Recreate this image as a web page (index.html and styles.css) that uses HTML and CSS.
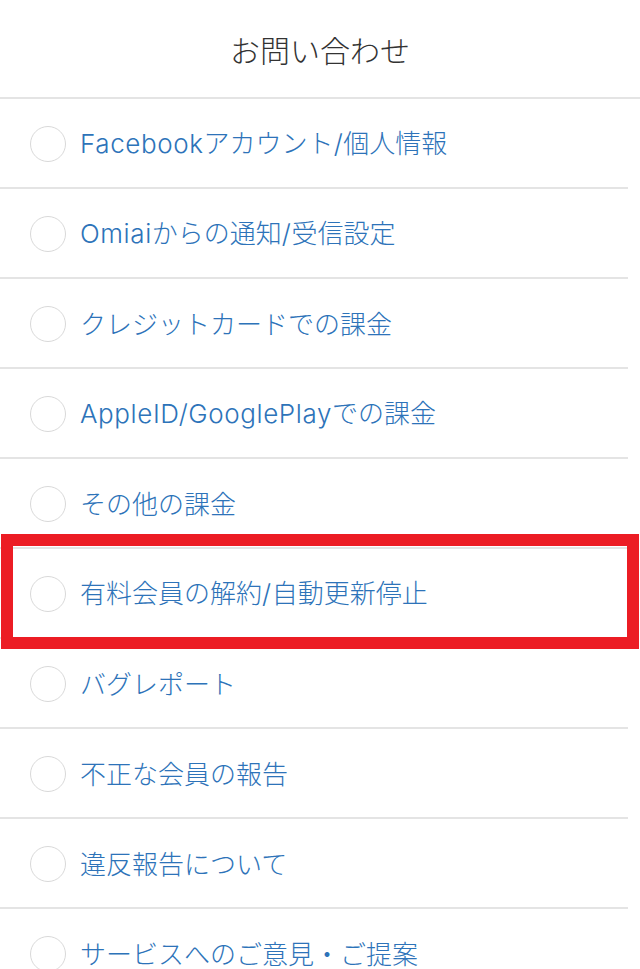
FILE: index.html
```html
<!DOCTYPE html>
<html lang="ja">
<head>
<meta charset="utf-8">
<title>お問い合わせ</title>
<link rel="stylesheet" href="styles.css">
</head>
<body>
<header class="header">
  <h1 class="title">お問い合わせ</h1>
</header>
<ul class="list">
  <li class="row"><span class="radio"></span><span class="label"><span class="latin">Facebook</span>アカウント<span class="latin">/</span>個人情報</span></li>
  <li class="row"><span class="radio"></span><span class="label"><span class="latin">Omiai</span>からの通知<span class="latin">/</span>受信設定</span></li>
  <li class="row"><span class="radio"></span><span class="label">クレジットカードでの課金</span></li>
  <li class="row"><span class="radio"></span><span class="label"><span class="latin">AppleID/GooglePlay</span>での課金</span></li>
  <li class="row"><span class="radio"></span><span class="label">その他の課金</span></li>
  <li class="row row-marked"><span class="radio"></span><span class="label">有料会員の解約<span class="latin">/</span>自動更新停止</span><span class="highlight"></span></li>
  <li class="row"><span class="radio"></span><span class="label">バグレポート</span></li>
  <li class="row"><span class="radio"></span><span class="label">不正な会員の報告</span></li>
  <li class="row"><span class="radio"></span><span class="label">違反報告について</span></li>
  <li class="row"><span class="radio"></span><span class="label">サービスへのご意見・ご提案</span></li>
</ul>
</body>
</html>
```

FILE: styles.css
```css
html, body {
  margin: 0;
  padding: 0;
  background: #ffffff;
}
body {
  width: 640px;
  height: 969px;
  overflow: hidden;
  font-family: "Noto Sans CJK JP", sans-serif;
}
.header {
  height: 97px;
  border-bottom: 2px solid #e4e4e4;
  display: flex;
  align-items: center;
  justify-content: center;
}
.title {
  margin: 0;
  font-size: 30px;
  font-weight: 300;
  color: #333333;
  line-height: 1;
}
.list {
  list-style: none;
  margin: 0;
  padding: 0;
}
.row {
  position: relative;
  width: 598px;
  height: 88px;
  border-bottom: 2px solid #e4e4e4;
  display: flex;
  align-items: center;
  padding-left: 30px;
  gap: 14px;
}
.radio {
  width: 36px;
  height: 36px;
  box-sizing: border-box;
  border: 1.5px solid #d9d9d9;
  border-radius: 50%;
  flex: none;
  margin-top: 2px;
}
.label {
  font-size: 26px;
  font-weight: 300;
  color: #2d73b9;
  line-height: 1;
  white-space: nowrap;
}
.latin {
  font-family: "Inter", "Liberation Sans", sans-serif;
  font-weight: 300;
  letter-spacing: 0.6px;
}
.highlight {
  position: absolute;
  top: -15px;
  left: 1px;
  width: 638px;
  height: 115px;
  box-sizing: border-box;
  border: 12px solid #ec1c24;
  pointer-events: none;
}
```
